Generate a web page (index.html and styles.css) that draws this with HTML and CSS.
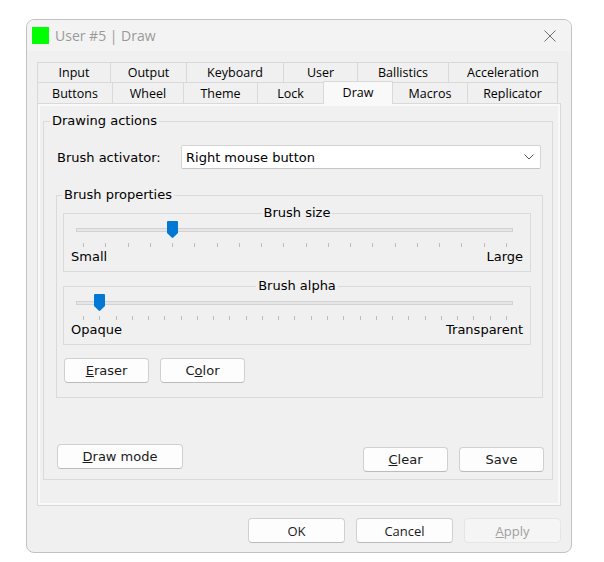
FILE: index.html
```html
<!DOCTYPE html>
<html lang="en">
<head>
  <meta charset="UTF-8">
  <title>User #5 | Draw</title>
  <link rel="stylesheet" href="styles.css">
</head>
<body>
  <div class="window">
    <div class="titlebar">
      <span class="app-icon"></span>
      <span class="title">User #5 | Draw</span>
      <svg class="close" width="12" height="12" viewBox="0 0 12 12">
        <path d="M0.5 0.5 L11.5 11.5 M11.5 0.5 L0.5 11.5" stroke="#6f6f6f" stroke-width="1" fill="none"/>
      </svg>
    </div>

    <div class="tabs">
      <div class="tab-row row1">
        <div class="tab">Input</div>
        <div class="tab">Output</div>
        <div class="tab">Keyboard</div>
        <div class="tab">User</div>
        <div class="tab">Ballistics</div>
        <div class="tab">Acceleration</div>
      </div>
      <div class="tab-row row2">
        <div class="tab">Buttons</div>
        <div class="tab">Wheel</div>
        <div class="tab">Theme</div>
        <div class="tab">Lock</div>
        <div class="tab active">Draw</div>
        <div class="tab">Macros</div>
        <div class="tab">Replicator</div>
      </div>
    </div>

    <div class="panel">
      <fieldset class="group actions">
        <legend>Drawing actions</legend>

        <div class="field-row">
          <label class="field-label">Brush activator:</label>
          <div class="combo">
            <span>Right mouse button</span>
            <svg width="10" height="6" viewBox="0 0 10 6">
              <path d="M0.5 0.5 L5 5 L9.5 0.5" stroke="#555" stroke-width="1" fill="none"/>
            </svg>
          </div>
        </div>

        <fieldset class="group props">
          <legend>Brush properties</legend>

          <fieldset class="group slider-group">
            <legend>Brush size</legend>
            <div class="slider" data-ticks="20" data-value="4">
              <div class="track"></div>
              <div class="ticks"></div>
            </div>
            <div class="slider-labels"><span>Small</span><span>Large</span></div>
          </fieldset>

          <fieldset class="group slider-group alpha">
            <legend>Brush alpha</legend>
            <div class="slider" data-ticks="27" data-value="1">
              <div class="track"></div>
              <div class="ticks"></div>
            </div>
            <div class="slider-labels"><span>Opaque</span><span>Transparent</span></div>
          </fieldset>

          <div class="btn-row">
            <button class="btn small"><u>E</u>raser</button>
            <button class="btn small">C<u>o</u>lor</button>
          </div>
        </fieldset>

        <div class="bottom-row">
          <button class="btn wide"><u>D</u>raw mode</button>
          <div class="btn-row right">
            <button class="btn small"><u>C</u>lear</button>
            <button class="btn small">Save</button>
          </div>
        </div>
      </fieldset>
    </div>

    <div class="footer">
      <button class="btn dlg">OK</button>
      <button class="btn dlg">Cancel</button>
      <button class="btn dlg disabled"><u>A</u>pply</button>
    </div>
  </div>

  <script>
    const thumbSvg = '<svg width="11" height="17" viewBox="0 0 11 17">' +
      '<path d="M1 0 H10 Q11 0 11 1 V12 L6.3 16.6 Q5.5 17.3 4.7 16.6 L0 12 V1 Q0 0 1 0 Z" fill="#0078d4"/></svg>';

    document.querySelectorAll('.slider').forEach(function (slider) {
      const count = parseInt(slider.dataset.ticks);
      const value = parseInt(slider.dataset.value);
      const ticks = slider.querySelector('.ticks');
      for (let i = 0; i < count; i++) {
        ticks.appendChild(document.createElement('span'));
      }
      const step = 423 / (count - 1);
      const thumb = document.createElement('div');
      thumb.className = 'thumb';
      thumb.innerHTML = thumbSvg;
      thumb.style.left = (19 + value * step - 5) + 'px';
      slider.appendChild(thumb);
    });
  </script>
</body>
</html>
```

FILE: styles.css
```css
body {
  margin: 0;
  padding: 19px 0 0 26px;
  background: #fff;
  font-family: "DejaVu Sans", Verdana, sans-serif;
  font-size: 13px;
  color: #000;
}
.window {
  width: 546px;
  height: 534px;
  box-sizing: border-box;
  border: 1px solid #c2c2c2;
  border-radius: 8px;
  background: #f0f0f0;
  overflow: hidden;
}
.titlebar {
  height: 31px;
  display: flex;
  align-items: center;
  padding-left: 5px;
  background: #f3f3f3;
}
.app-icon {
  width: 17px;
  height: 17px;
  background: #00ff00;
}
.title {
  margin-left: 6px;
  font-family: "Open Sans", "Liberation Sans", sans-serif;
  font-size: 14px;
  color: #9a9a9a;
}
.close {
  margin-left: auto;
  margin-right: 15px;
}

/* tabs */
.tabs {
  margin: 11px 0 0 10px;
  width: 521px;
  font-family: "Open Sans", "Liberation Sans", sans-serif;
  font-size: 12.5px;
}
.tab-row {
  display: grid;
}
.row1 {
  height: 20px;
  grid-template-columns: 73px 76px 97px 74px 91px 110px;
}
.row2 {
  height: 21px;
  grid-template-columns: 75px 71px 74px 66px 70px 74px 91px;
}
.tab {
  display: flex;
  align-items: center;
  justify-content: center;
  border-top: 1px solid #d9d9d9;
  border-left: 1px solid #d9d9d9;
  background: #f0f0f0;
}
.tab:last-child {
  border-right: 1px solid #d9d9d9;
}
.tab.active {
  margin: -1px 0 -1px;
  padding-bottom: 2px;
  background: #f9f9f9;
  border-right: 1px solid #d9d9d9;
  position: relative;
  z-index: 1;
}
.tab.active + .tab {
  border-left: none;
}

/* page */
.panel {
  margin-left: 10px;
  width: 524px;
  height: 403px;
  box-sizing: border-box;
  border: 1px solid #d9d9d9;
  box-shadow: inset 0 0 0 2px #f9f9f9;
  overflow: hidden;
}
.group {
  margin: 0;
  padding: 0;
  border: 1px solid #dadada;
  min-inline-size: 0;
}
.group legend {
  padding: 0 2px;
  line-height: 16px;
}
.actions {
  margin: 9px 7px 0 5px;
  padding-bottom: 7px;
}
.actions > legend {
  margin-left: 6px;
}
.field-row {
  display: flex;
  align-items: center;
  margin-top: 16px;
  padding: 0 11px 0 13px;
}
.field-label {
  width: 124px;
}
.combo {
  flex: 1;
  height: 24px;
  box-sizing: border-box;
  display: flex;
  align-items: center;
  justify-content: space-between;
  padding: 0 6px 0 4px;
  background: #fff;
  border: 1px solid #d4d4d4;
  border-bottom-color: #c4c4c4;
  border-radius: 2px;
}

.props {
  margin: 18px 9px 0 12px;
  padding-bottom: 14px;
}
.props > legend {
  margin-left: 5px;
}
.slider-group {
  margin: 2px 11px 0 6px;
  padding-bottom: 6px;
}
.slider-group legend {
  margin: 0 auto;
}
.slider-group.alpha {
  margin-top: 6px;
}
.slider {
  position: relative;
  height: 28px;
  box-sizing: border-box;
  padding-top: 7px;
}
.track {
  margin: 0 17px 0 12px;
  height: 4px;
  box-sizing: border-box;
  background: #e6e6e6;
  border: 1px solid #d2d2d2;
}
.ticks {
  display: flex;
  justify-content: space-between;
  margin: 11px 23px 0 19px;
  height: 4px;
}
.ticks span {
  width: 1px;
  background: #bdbdbd;
}
.thumb {
  position: absolute;
  top: 0;
  width: 11px;
  height: 17px;
}
.thumb svg {
  display: block;
}
.slider-labels {
  display: flex;
  justify-content: space-between;
  padding: 0 7px;
  line-height: 16px;
}

.btn-row {
  display: flex;
  gap: 11px;
  margin: 13px 0 0 7px;
}
.btn {
  height: 25px;
  box-sizing: border-box;
  padding: 0;
  font-family: "DejaVu Sans", Verdana, sans-serif;
  font-size: 13px;
  color: #1a1a1a;
  background: #fdfdfd;
  border: 1px solid #d0d0d0;
  border-bottom-color: #bcbcbc;
  border-radius: 4px;
}
.btn.small {
  width: 85px;
}
.btn.wide {
  width: 126px;
}
.bottom-row {
  display: flex;
  justify-content: space-between;
  align-items: flex-start;
  margin-top: 46px;
  padding: 0 8px 0 13px;
}
.btn-row.right {
  margin: 3px 0 0;
}

.footer {
  display: flex;
  justify-content: flex-end;
  gap: 11px;
  margin-top: 12px;
  padding-right: 10px;
}
.btn.dlg {
  width: 97px;
  font-family: "Open Sans", "Liberation Sans", sans-serif;
}
.btn.disabled {
  background: #f5f5f5;
  border-color: #e5e5e5;
  color: #a0a0a0;
}
```
